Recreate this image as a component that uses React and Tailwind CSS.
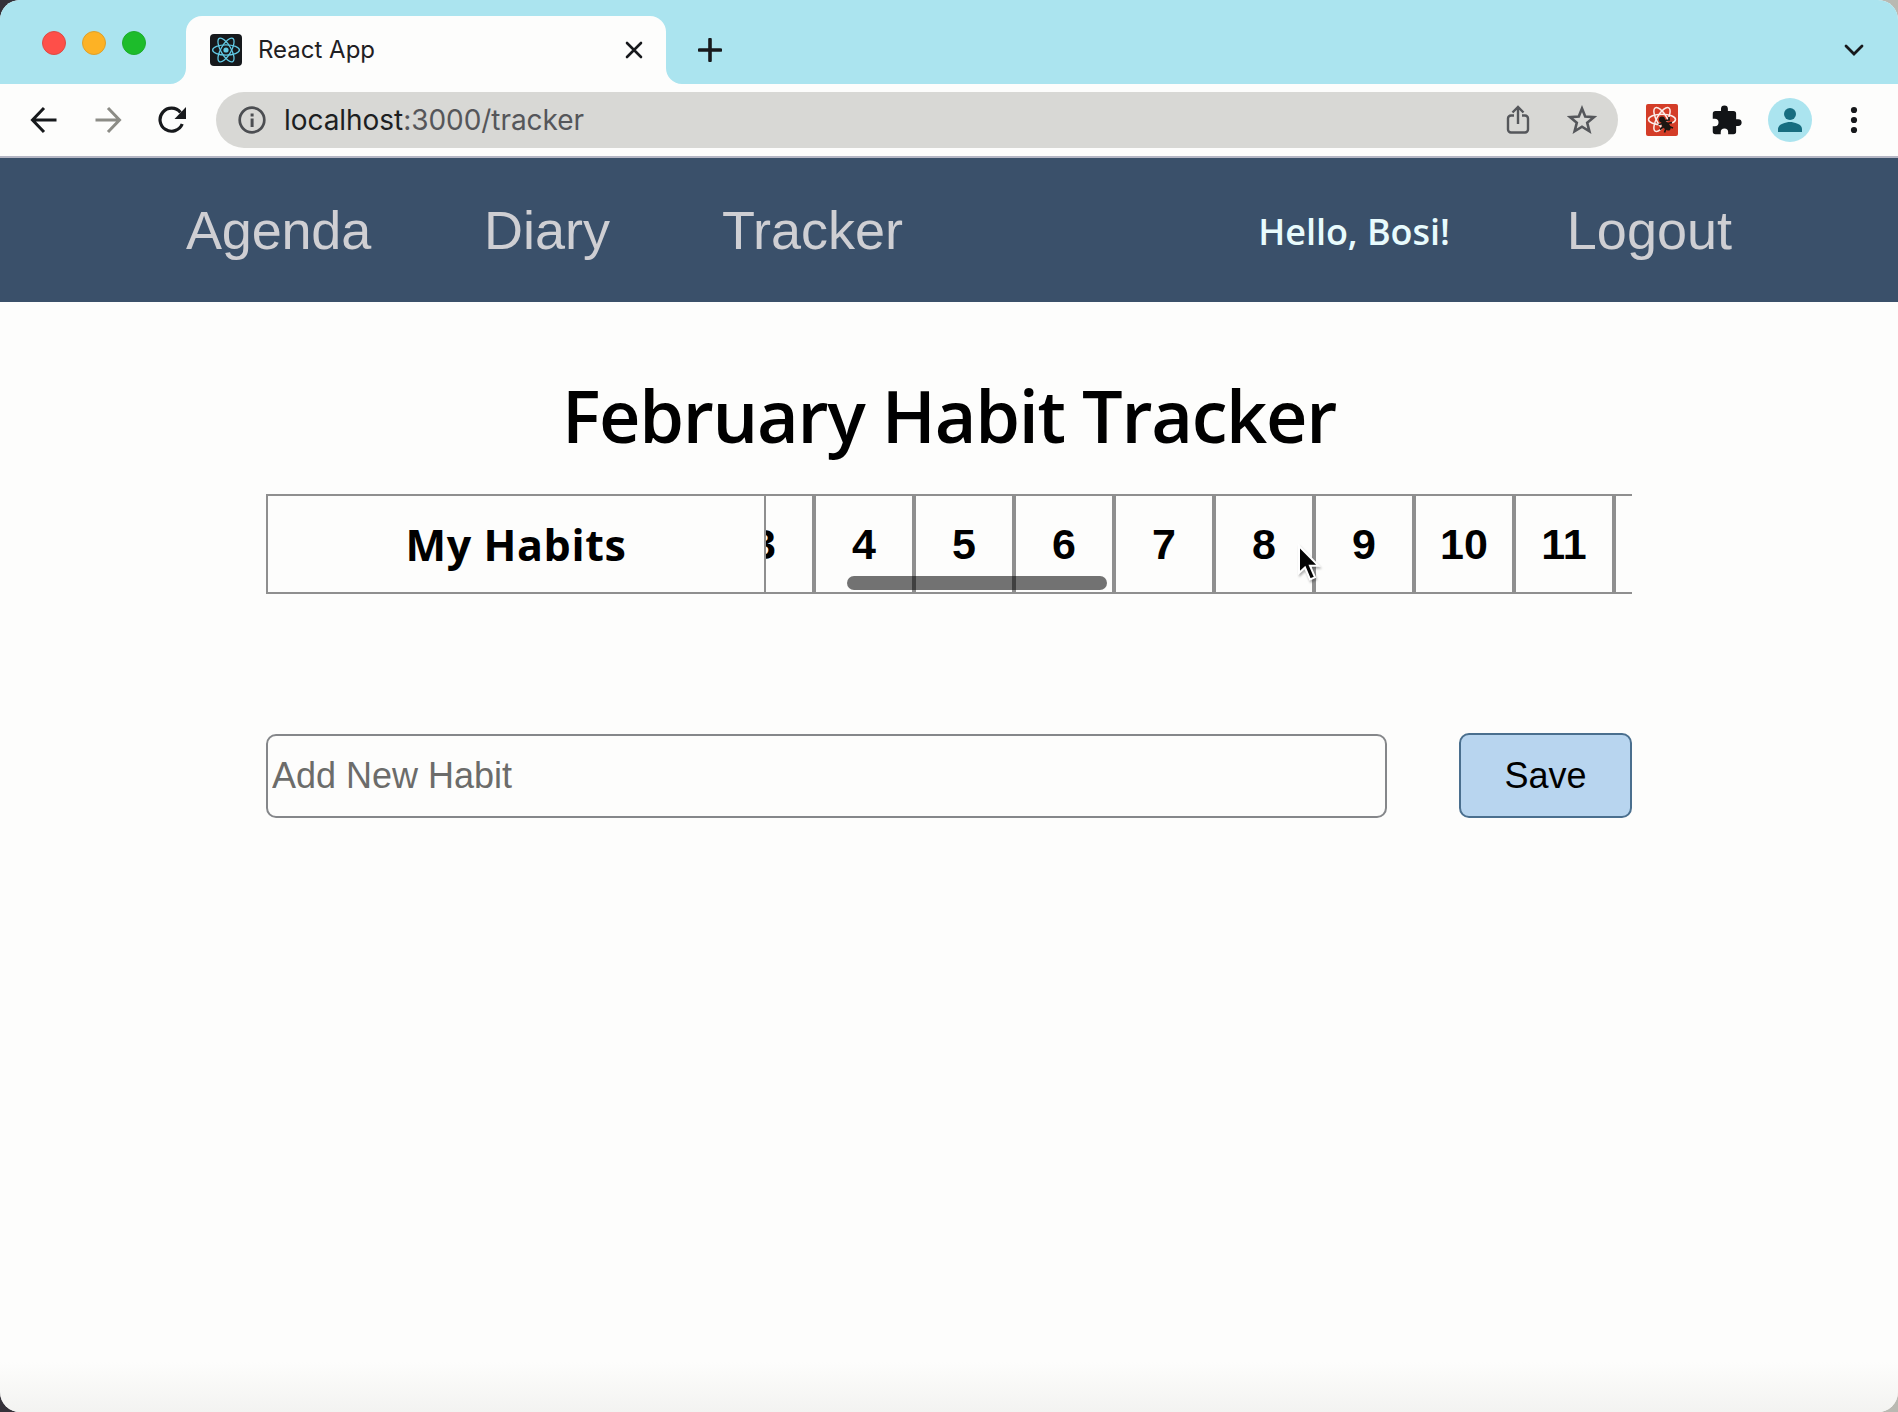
import React from "react";

const days = [3, 4, 5, 6, 7, 8, 9, 10, 11, 12];

function ReactFavicon() {
  return (
    <svg viewBox="0 0 32 32" className="h-8 w-8 shrink-0">
      <rect width="32" height="32" rx="4" fill="#16191c" />
      <g fill="none" stroke="#61c9e4" strokeWidth="1.3">
        <ellipse cx="16" cy="16" rx="13.4" ry="5.1" />
        <ellipse cx="16" cy="16" rx="13.4" ry="5.1" transform="rotate(60 16 16)" />
        <ellipse cx="16" cy="16" rx="13.4" ry="5.1" transform="rotate(120 16 16)" />
      </g>
      <circle cx="16" cy="16" r="2.6" fill="#61c9e4" />
    </svg>
  );
}

function DevtoolsIcon() {
  return (
    <svg viewBox="0 0 32 32" className="h-8 w-8 shrink-0">
      <rect width="32" height="32" rx="2" fill="#d43d28" />
      <g fill="none" stroke="#fbeeea" strokeWidth="1.5">
        <ellipse cx="16" cy="15.5" rx="13.5" ry="5.2" />
        <ellipse cx="16" cy="15.5" rx="13.5" ry="5.2" transform="rotate(60 16 15.5)" />
        <ellipse cx="16" cy="15.5" rx="13.5" ry="5.2" transform="rotate(120 16 15.5)" />
      </g>
      <path d="M17 19l8-3 4 10-6 5-7-4z" fill="#d43d28" />
      <circle cx="16" cy="15.5" r="3" fill="#1d1712" />
      <ellipse cx="20" cy="21.5" rx="3.4" ry="6" transform="rotate(-42 20 21.5)" fill="#1d1712" />
      <path
        d="M12.500 20.500l5-1M14 25.500l4-3.500M18.500 28.500l1.500-4M18 16.500l5-.5v-3M21.500 19.500l4.500-1M23 22.500l4 1.500"
        stroke="#1d1712"
        strokeWidth="1.700"
        fill="none"
      />
    </svg>
  );
}

function TabStrip() {
  return (
    <div className="flex h-[84px] items-end bg-[#abe4ef]">
      <div className="mb-[29px] ml-[42px] flex gap-4">
        <span className="h-6 w-6 rounded-full border border-[#dd4a43] bg-[#fe4f49]" />
        <span className="h-6 w-6 rounded-full border border-[#dda02c] bg-[#fdb225]" />
        <span className="h-6 w-6 rounded-full border border-[#1eac2c] bg-[#1dbc2b]" />
      </div>
      <svg viewBox="0 0 16 16" className="ml-[24px] h-4 w-4 shrink-0">
        <path d="M16 0v16H0A16 16 0 0 0 16 0z" fill="#fdfdfc" />
      </svg>
      <div className="flex h-[68px] w-[480px] items-center rounded-t-2xl bg-[#fdfdfc] pl-6 pr-[22px]">
        <ReactFavicon />
        <span className="ml-4 font-['Inter'] text-[24px] leading-8 text-[#1f2023]">
          React App
        </span>
        <svg viewBox="0 0 20 20" className="ml-auto h-5 w-5">
          <path d="M3 3l14 14M17 3L3 17" stroke="#17191c" strokeWidth="2.600" strokeLinecap="round" />
        </svg>
      </div>
      <svg viewBox="0 0 16 16" className="h-4 w-4 shrink-0">
        <path d="M0 0v16h16A16 16 0 0 1 0 0z" fill="#fdfdfc" />
      </svg>
      <svg viewBox="0 0 24 24" className="mb-[22px] ml-4 h-6 w-6">
        <path d="M12 1.500v21M1.500 12h21" stroke="#17191c" strokeWidth="3.600" strokeLinecap="round" />
      </svg>
      <svg viewBox="0 0 20 12" className="mb-[28px] ml-auto mr-[34px] h-3 w-5">
        <path d="M2 2l8 8 8-8" fill="none" stroke="#17191c" strokeWidth="2.800" strokeLinecap="round" />
      </svg>
    </div>
  );
}

function Toolbar() {
  return (
    <div className="flex h-[74px] items-center border-b-2 border-[#b4b6c4] bg-[#fdfdfc]">
      <svg viewBox="0 0 28 28" className="ml-[30px] h-7 w-7 shrink-0">
        <path d="M26.500 14H3M14 2L2.500 14 14 26" fill="none" stroke="#17191c" strokeWidth="3" />
      </svg>
      <svg viewBox="0 0 28 28" className="ml-[36px] h-7 w-7 shrink-0">
        <path d="M1.500 14H25M14 2l11.500 12L14 26" fill="none" stroke="#8c8c86" strokeWidth="3" />
      </svg>
      <svg viewBox="0 0 30 28" className="ml-[36px] h-7 w-[30px] shrink-0">
        <path d="M24.200 18A11.500 11.500 0 1 1 22.500 6.500" fill="none" stroke="#17191c" strokeWidth="3.200" />
        <path d="M28 1v12H16.500z" fill="#17191c" />
      </svg>
      <div className="ml-[28px] flex h-14 w-[1402px] items-center rounded-full bg-[#d8d8d5] pl-[22px] pr-[21px]">
        <svg viewBox="0 0 28 28" className="h-7 w-7 shrink-0">
          <circle cx="14" cy="14" r="12.300" fill="none" stroke="#4c4e52" strokeWidth="2.700" />
          <path d="M12.600 12.500h3V21h-3zM12.600 7.500h3v3h-3z" fill="#4c4e52" />
        </svg>
        <span className="ml-[18px] font-['Inter'] text-[28px] leading-9 tracking-[-0.05px] text-[#1d1f22]">
          localhost<span className="text-[#55565a]">:3000/tracker</span>
        </span>
        <svg viewBox="0 0 24 30" className="ml-auto h-[30px] w-6 shrink-0">
          <path
            d="M8 10.500H5A3 3 0 0 0 2 13.500v11A3 3 0 0 0 5 27.500h14a3 3 0 0 0 3-3v-11a3 3 0 0 0-3-3h-3M12 19V3M6.500 7.500L12 2l5.500 5.500"
            fill="none"
            stroke="#55575b"
            strokeWidth="2.400"
          />
        </svg>
        <svg viewBox="0 0 30 30" className="ml-[37px] h-[30px] w-[30px] shrink-0">
          <path
            d="M15 3.500l3.200 8.100 8.700.6-6.700 5.600 2.200 8.500L15 21.700l-7.400 4.600 2.200-8.500-6.700-5.600 8.700-.6z"
            fill="none"
            stroke="#55575b"
            strokeWidth="2.600"
          />
        </svg>
      </div>
      <div className="ml-[28px]">
        <DevtoolsIcon />
      </div>
      <svg viewBox="0 0 24 24" className="ml-[32px] h-[33px] w-[33px] shrink-0">
        <path
          d="M20.500 11H19V7a2 2 0 0 0-2-2h-4V3.500a2.500 2.500 0 0 0-5 0V5H4a2 2 0 0 0-2 2v3.800h1.500a2.700 2.700 0 0 1 0 5.400H2V20a2 2 0 0 0 2 2h3.800v-1.500a2.700 2.700 0 0 1 5.400 0V22H17a2 2 0 0 0 2-2v-4h1.500a2.500 2.500 0 0 0 0-5z"
          fill="#121417"
        />
      </svg>
      <svg viewBox="0 0 44 44" className="ml-[25px] h-11 w-11 shrink-0">
        <circle cx="22" cy="22" r="22" fill="#abe4ef" />
        <circle cx="22" cy="16" r="6" fill="#176d80" />
        <path d="M10 34v-3c0-5 8-7 12-7s12 2 12 7v3z" fill="#176d80" />
      </svg>
      <svg viewBox="0 0 8 28" className="ml-[38px] h-7 w-2 shrink-0">
        <circle cx="4" cy="4" r="3.100" fill="#17191c" />
        <circle cx="4" cy="14" r="3.100" fill="#17191c" />
        <circle cx="4" cy="24" r="3.100" fill="#17191c" />
      </svg>
    </div>
  );
}

function NavBar() {
  return (
    <nav className="flex h-[144px] items-center bg-[#3a506a] pl-[186px] pr-[166px] font-['Liberation_Sans'] text-[54px] text-[#cfcfd3]">
      <a className="tracking-[-0.2px]">Agenda</a>
      <a className="ml-[113px]">Diary</a>
      <a className="ml-[112px]">Tracker</a>
      <span className="ml-auto mr-[117px] pt-[3px] font-['Open_Sans'] text-[36px] font-semibold tracking-[-0.05px] text-[#e8fbfd]">
        Hello, Bosi!
      </span>
      <a>Logout</a>
    </nav>
  );
}

function HabitTable() {
  return (
    <div className="relative mt-[22px] flex h-[100px] w-[1366px]">
      <div className="flex w-[500px] shrink-0 items-center justify-center border-2 border-[#8f8f8f] pt-[2px] font-['Open_Sans'] text-[43px] font-bold">
        <span className="tracking-[0.6px]">My Habits</span>
      </div>
      <div className="flex flex-1 overflow-hidden">
        {days.map((day, i) => (
          <div
            key={day}
            className={`flex w-[100px] shrink-0 items-center justify-center border-2 border-[#8f8f8f] font-['Liberation_Sans'] text-[43px] font-bold ${i === 0 ? "-ml-[52px]" : ""}`}
          >
            {day}
          </div>
        ))}
      </div>
      <div className="absolute left-[581px] top-[82px] h-[14px] w-[260px] rounded-full bg-black/55" />
      <svg
        viewBox="0 0 24 38"
        className="absolute left-[1031px] top-[50px] h-[38px] w-6 drop-shadow-[1px_2px_1px_rgba(0,0,0,0.3)]"
      >
        <path
          d="M2 2v27l6-5.500 5 12 5-2.200-5-11.500h8.500z"
          fill="#050505"
          stroke="#fff"
          strokeWidth="2"
        />
      </svg>
    </div>
  );
}

export default function App() {
  return (
    <div className="h-[1412px] w-[1898px] overflow-hidden bg-[linear-gradient(to_right,#35323a_50%,#b9b9b2_50%)]">
      <div className="flex h-full flex-col overflow-hidden rounded-[20px] bg-[#fdfdfc]">
        <TabStrip />
        <Toolbar />
        <NavBar />
        <main className="flex flex-1 flex-col items-center text-black">
          <h1 className="mt-[58px] mb-[2px] font-['Open_Sans'] text-[72px] font-semibold leading-[110px] tracking-[-1.3px]">
            February Habit Tracker
          </h1>
          <HabitTable />
          <div className="mt-[139px] flex w-[1366px] items-end justify-between font-['Liberation_Sans'] text-[36px]">
            <input
              placeholder="Add New Habit"
              className="h-[84px] w-[1121px] rounded-[10px] border-2 border-[#85878a] bg-transparent px-1 placeholder:text-[#6c6c6a]"
            />
            <button className="h-[85px] w-[173px] rounded-[10px] border-2 border-[#4a6f8e] bg-[#b8d5ef]">
              Save
            </button>
          </div>
          <div className="mt-auto h-[50px] w-full bg-linear-to-b from-transparent to-[#f3f3f1]" />
        </main>
      </div>
    </div>
  );
}
